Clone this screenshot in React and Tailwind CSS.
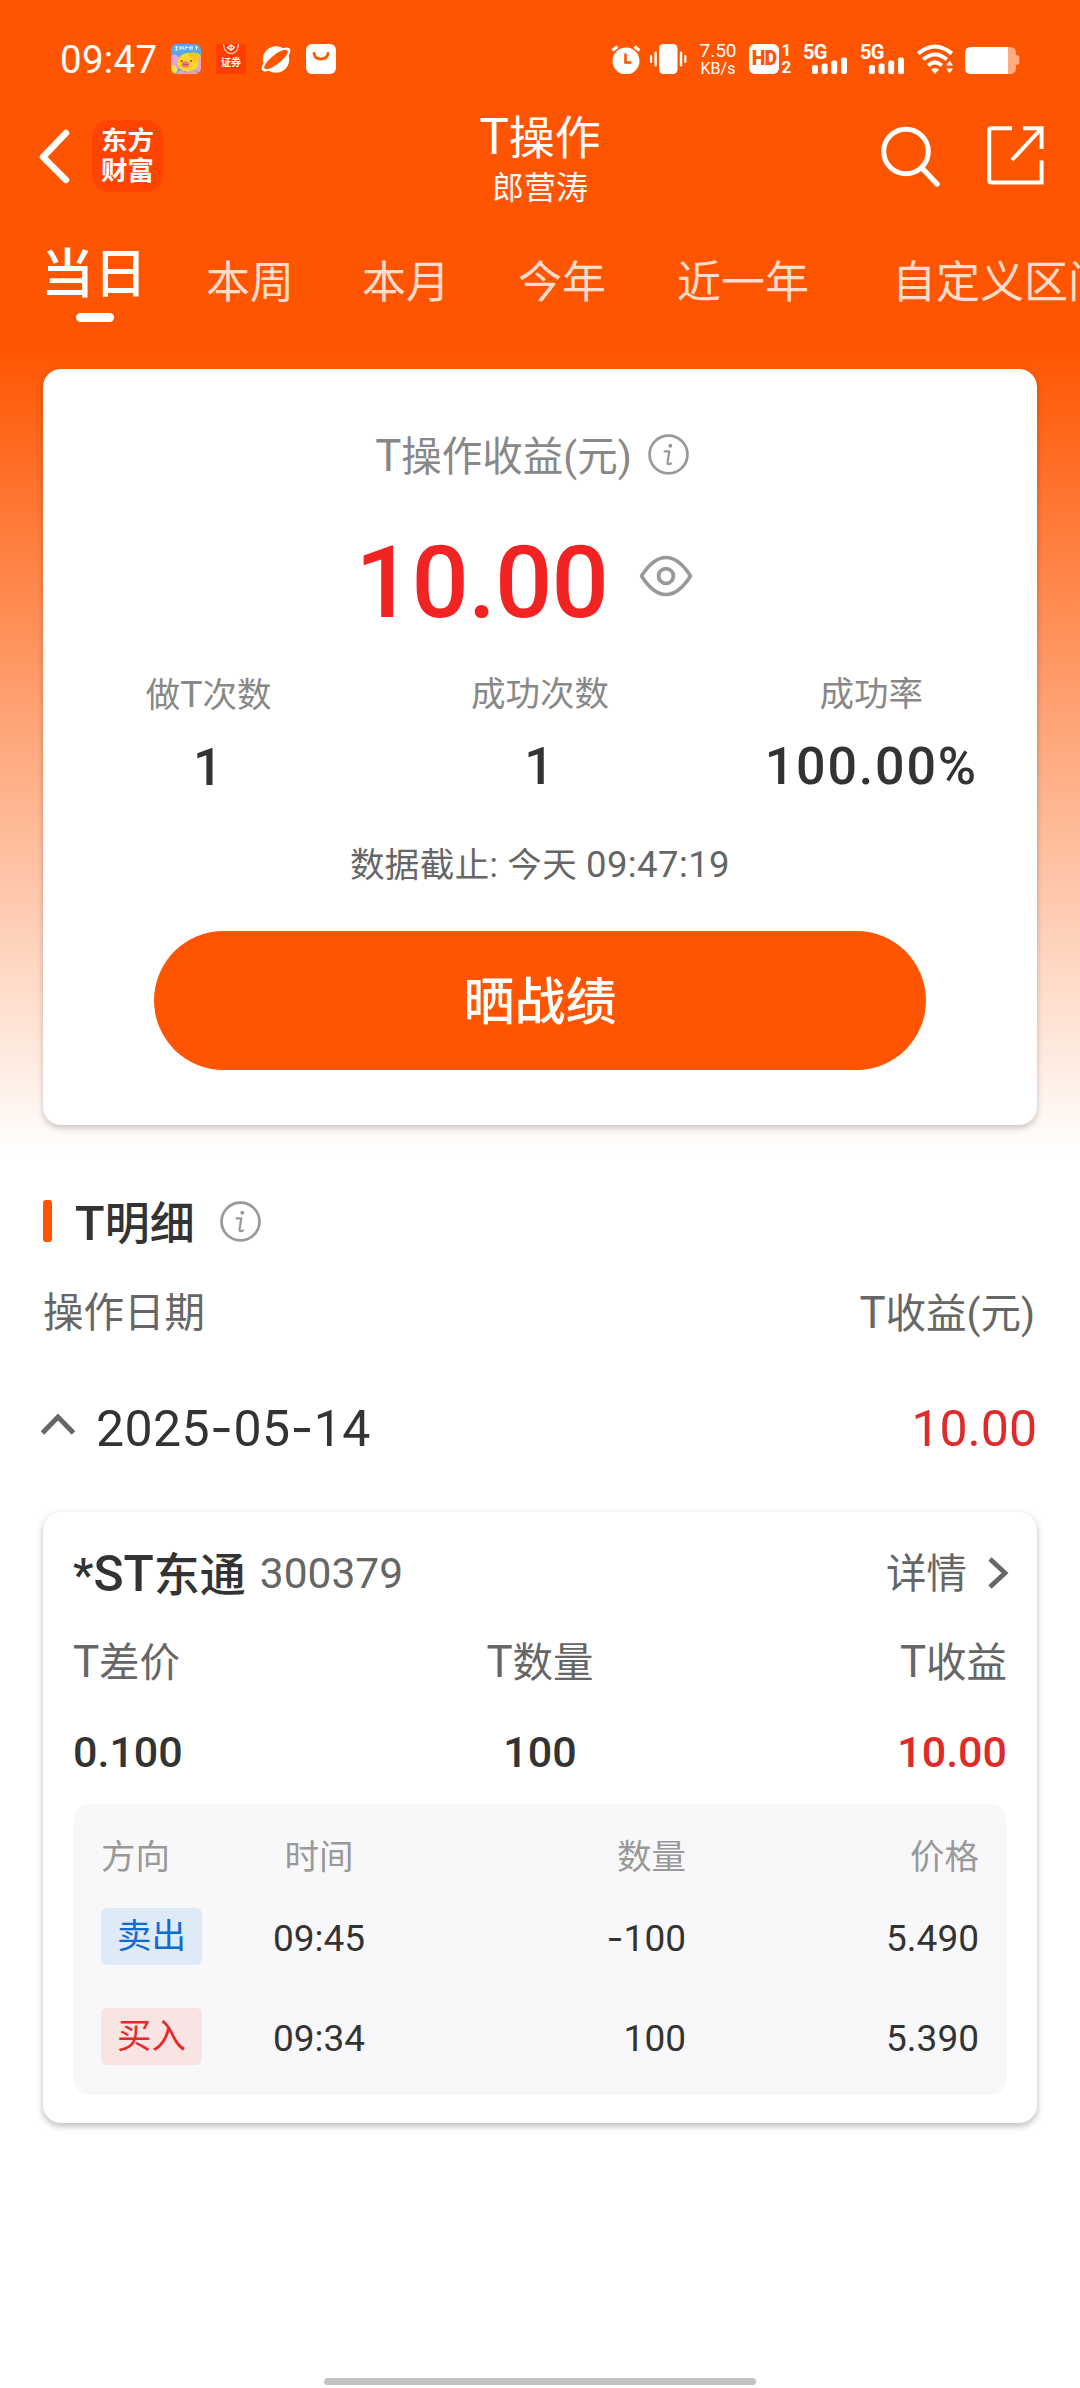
import React, {useState} from "react";

const TABS = [
	{key: "day", label: "当日", className: ""},
	{key: "week", label: "本周", className: "ml-[62px]"},
	{key: "month", label: "本月", className: "ml-[68px]"},
	{key: "year", label: "今年", className: "ml-[68px]"},
	{key: "lastYear", label: "近一年", className: "ml-[71px]"},
	{key: "custom", label: "自定义区间", className: "ml-[83px]"},
];

const STATS = [
	{label: "做T次数", value: "1"},
	{label: "成功次数", value: "1"},
	{label: "成功率", value: "100.00%"},
];

const TRADES = [
	{side: "sell", sideText: "卖出", time: "09:45", amount: "-100", price: "5.490"},
	{side: "buy", sideText: "买入", time: "09:34", amount: "100", price: "5.390"},
];

// latin letters sit a little taller than the chinese ones
function Label({children}) {
	return children.split(/([A-Z]+)/).map((part, index) =>
		/[A-Z]/.test(part) ? (
			<span key={index} className="text-[1.08em]">
				{part}
			</span>
		) : (
			part
		)
	);
}

// numbers with a wide hyphen (dates, negative amounts)
function Digits({children}) {
	return children.split(/(-)/).map((part, index) =>
		part === "-" ? (
			<span key={index} className="font-['Inter',sans-serif]">
				-
			</span>
		) : (
			part
		)
	);
}

function InfoIcon() {
	return (
		<svg width="41" height="41" viewBox="0 0 42 42" fill="none">
			<circle cx="21" cy="21" r="19.4" stroke="#999" strokeWidth="2.8" />
			<circle cx="22.8" cy="12" r="2" fill="#999" />
			<path d="M17 17.8 H21.8 L20 29.4 Q20 31 21.5 30.8 L23.6 30.2" stroke="#999" strokeWidth="2.3" strokeLinejoin="round" strokeLinecap="round" />
		</svg>
	);
}

function SignalIcon() {
	return (
		<div className="relative w-[45px] h-[30px]">
			<span className="absolute left-0 top-0 text-[20px] leading-[16px] font-bold tracking-[-0.8px]">5G</span>
			<svg className="absolute left-[9px] top-[13px]" width="36" height="17" viewBox="0 0 36 17" fill="#fff">
				<rect x="0" y="8" width="6" height="9" rx="2" />
				<rect x="9.6" y="6.5" width="6" height="10.5" rx="2" />
				<rect x="19.2" y="3.5" width="6" height="13.5" rx="2" />
				<rect x="29" y="0.5" width="6" height="16.5" rx="2" />
			</svg>
		</div>
	);
}

function StatusBar() {
	return (
		<div className="h-[104px] pt-[44px] pl-[60px] pr-[60px] flex items-start text-white">
			<span className="w-[111px] text-[38.5px] leading-[31px] tracking-[0.3px]">09:47</span>

			{/* notification icons */}
			<div className="flex gap-[15px]">
				<svg width="30" height="30" viewBox="0 0 30 30">
					<defs>
						<clipPath id="duckClip">
							<rect width="30" height="30" rx="6" />
						</clipPath>
					</defs>
					<g clipPath="url(#duckClip)">
						<rect width="30" height="30" fill="#58a8ea" />
						<path d="M0 12 Q5 8 8 14 L9 24 L0 26 Z" fill="#e7a3d8" />
						<path d="M30 12 L24 17 L25 27 L30 28 Z" fill="#f3a3b6" />
						<ellipse cx="17" cy="18.5" rx="10.5" ry="9.5" fill="#fcd52c" />
						<path d="M17 9 Q27 7 30 12 Q27 18 22 17 Z" fill="#f6c81f" />
						<path d="M0 21 Q4 20 7 26 L4 30 H0 Z" fill="#f9e04a" />
						<ellipse cx="14.5" cy="20.5" rx="4" ry="3.2" fill="#ef7f6a" />
						<circle cx="13.2" cy="20.5" r="0.8" fill="#a83a30" />
						<circle cx="16" cy="20.5" r="0.8" fill="#a83a30" />
						<circle cx="10.5" cy="17" r="0.9" fill="#5b3a14" />
						<circle cx="20" cy="17" r="0.9" fill="#5b3a14" />
						<path d="M5 30 Q8 25 12 27 Q16 30 20 27 Q25 25 27 30 Z" fill="#f39bb0" />
						<path d="M4 3 h3 M5.5 2 v4 M4 6 h3 M9 2 v4 M9 4 h3 M12 2 v4 M15 2 l-1 4 M14.5 3.5 h3 M19 2 v4 M19 3 h3 M21 3 v3 M24 3 h3 M25.5 3 v3" stroke="#fff" strokeWidth="0.9" fill="none" />
					</g>
				</svg>

				<div className="w-[30px] h-[30px] rounded-[2px] bg-[#ff3d05] flex flex-col items-center overflow-hidden">
					<svg width="18" height="11" viewBox="0 0 18 11" fill="none" stroke="#fff">
						<path d="M1.5 0 Q2 9.5 9 9.5 Q16 9.5 16.5 0" strokeWidth="1" />
						<path d="M5.5 3.5 L9 1 L12.5 3.5 L9 6.5 Z M9 2 v5" strokeWidth="1.1" />
					</svg>
					<span className="mt-[2px] text-[10px] leading-[12px] font-bold">证券</span>
				</div>

				<svg width="30" height="30" viewBox="0 0 30 30">
					<circle cx="15" cy="15.5" r="13.2" fill="#fff" />
					<g transform="rotate(-38 15 15.5)">
						<ellipse cx="15" cy="15.5" rx="17.5" ry="6.6" fill="#fff" />
						<ellipse cx="15" cy="15.5" rx="14.5" ry="4.6" fill="#f50" />
					</g>
				</svg>

				<svg width="30" height="30" viewBox="0 0 30 30">
					<rect width="30" height="30" rx="6" fill="#fff" />
					<path d="M8 9.5 Q9 15 15 15 Q21 15 22 9.5" stroke="#f50" strokeWidth="2.8" strokeLinecap="round" fill="none" />
				</svg>
			</div>

			<div className="ml-auto mr-[1px] flex">
				<svg width="30" height="30" viewBox="0 0 30 30">
					<circle cx="15" cy="17" r="13.5" fill="#fff" />
					<path d="M1.5 6.5 L6.5 2.5 M28.5 6.5 L23.5 2.5" stroke="#fff" strokeWidth="3.2" />
					<path d="M14.5 9.5 V18.5 H20.5" stroke="#f50" strokeWidth="2.6" fill="none" />
				</svg>
				<svg className="ml-[9px]" width="37" height="30" viewBox="0 0 37 30" fill="#fff">
					<rect x="9" y="0" width="18.5" height="30" rx="4.5" />
					<rect x="0" y="11" width="2.2" height="8" rx="1" />
					<rect x="4.4" y="7.5" width="2.4" height="15" rx="1" />
					<rect x="29.8" y="7.5" width="2.4" height="15" rx="1" />
					<rect x="34.2" y="11" width="2.2" height="8" rx="1" />
				</svg>
				<div className="ml-[12px] w-[38px] flex flex-col items-center">
					<span className="text-[19px] leading-[14px]">7.50</span>
					<span className="mt-[2px] text-[16px] leading-[17px]">KB/s</span>
				</div>
				<div className="ml-[12px] w-[30px] h-[30px] rounded-[6px] bg-white text-[#ff5500] text-[19.5px] leading-[30px] tracking-[-0.8px] font-black text-center">HD</div>
				<div className="ml-[2px] w-[11px] flex flex-col items-center text-[17px] font-bold">
					<span className="leading-[13px]">1</span>
					<span className="mt-[2px] leading-[17px]">2</span>
				</div>
				<div className="ml-[11px]">
					<SignalIcon />
				</div>
				<div className="ml-[12px]">
					<SignalIcon />
				</div>
				<svg className="ml-[12px]" width="38" height="30" viewBox="0 0 38 30" fill="none" stroke="#fff">
					<path d="M1.2 9.6 Q18 -4.6 34.8 9.6" strokeWidth="4" />
					<path d="M6.2 15.6 Q18 5.4 29.8 15.6" strokeWidth="4" />
					<path d="M11.2 21.4 Q18 15.4 24.8 21.4" strokeWidth="4" />
					<path d="M14 25.6 Q18 22.6 22 25.6 L18 30 Z" fill="#fff" stroke="none" />
					<path d="M29.2 21.5 L32.6 16.5 L36 21.5 Z M29.2 24.5 L32.6 29.5 L36 24.5 Z" fill="#fff" stroke="none" />
				</svg>
				<svg className="ml-[10px] -mr-[1px]" width="55" height="30" viewBox="0 0 55 30">
					<path d="M43 3 H45 Q51 3 51 9 V11 Q54.3 11.5 54.3 13.5 V18.5 Q54.3 20.5 51 21 V24 Q51 30 45 30 H43 Z" fill="#ffab80" />
					<path d="M6 3 H43 V30 H6 Q0 30 0 24 V9 Q0 3 6 3 Z" fill="#fff" />
				</svg>
			</div>
		</div>
	);
}

function NavBar() {
	return (
		<div className="h-[104px] pl-[38px] pr-[35px] grid grid-cols-[1fr_auto_1fr] grid-rows-[104px] items-center text-white">
			<div className="flex items-center">
				<svg width="34" height="56" viewBox="0 0 34 56" fill="none">
					<path d="M28 5 L5 29 L28 52" stroke="#fff" strokeWidth="6.5" strokeLinecap="round" strokeLinejoin="round" />
				</svg>
				<div className="ml-[20px] w-[71px] h-[72px] rounded-[16px] bg-[#ff4400] flex flex-col items-center justify-center text-[26.5px] leading-[30px] font-bold">
					<span>东方</span>
					<span>财富</span>
				</div>
			</div>

			<div className="self-start pt-[8px] mr-[3px] flex flex-col items-center">
				<h1 className="text-[46px] leading-[51px]">
					<Label>T操作</Label>
				</h1>
				<p className="mt-[3px] text-[32px] leading-[42px]">郎营涛</p>
			</div>

			<div className="flex justify-end items-center gap-[46px]">
				<svg width="62" height="62" viewBox="0 0 62 62" fill="none" stroke="#fff">
					<circle cx="27" cy="26.5" r="22.3" strokeWidth="5" />
					<path d="M43 43 L58 59" strokeWidth="5.4" strokeLinecap="round" />
				</svg>
				<svg className="mt-[-2px]" width="58" height="60" viewBox="0 0 58 60" fill="none" stroke="#fff" strokeWidth="4">
					<path d="M25 3.2 H4.5 Q2.2 3.2 2.2 5.5 V55 Q2.2 57.5 4.5 57.5 H54.6 V35.5" />
					<path d="M36 3.2 H54.6 V24" />
					<path d="M54 4 L25 35" />
				</svg>
			</div>
		</div>
	);
}

function RangeTabs() {
	const [active, setActive] = useState("day");

	return (
		<div className="h-[161px] pl-[44px] flex items-start overflow-hidden whitespace-nowrap">
			{TABS.map((tab) =>
				tab.key === active ? (
					<button key={tab.key} className={`shrink-0 w-[100px] h-[130px] pt-[35px] flex flex-col items-center text-white ${tab.className}`}>
						<span className="text-[53px] leading-[64px] font-medium">{tab.label}</span>
						<span className="mt-[6px] w-[38px] h-[9px] rounded-full bg-white mr-[-2px]"></span>
					</button>
				) : (
					<button key={tab.key} onClick={() => setActive(tab.key)} className={`shrink-0 pt-[45px] text-[44px] leading-[60px] text-[#ffdccb] ${tab.className}`}>
						{tab.label}
					</button>
				)
			)}
		</div>
	);
}

function SummaryCard() {
	return (
		<section className="mx-[43px] h-[756px] pt-[57px] rounded-[18px] bg-white shadow-[0_3px_6px_rgba(0,0,0,0.22)] flex flex-col items-center">
			<div className="h-[60px] pr-[16px] flex items-center gap-[16px] text-[40.5px] leading-[60px] text-[#888]">
				<span>
					<Label>T操作收益(元)</Label>
				</span>
				<span className="mt-[-4px]">
					<InfoIcon />
				</span>
			</div>

			<div className="mt-[37px] h-[120px] pr-[32px] flex items-center gap-[31px]">
				<span className="text-[101px] leading-[120px] tracking-[-1px] font-medium text-[#f22323]">10.00</span>
				<svg className="mt-[-14px]" width="54" height="42" viewBox="0 0 54 42" fill="none" stroke="#999">
					<path d="M2.5 21 C12 6 20 2.5 27 2.5 C34 2.5 42 6 51.5 21 C42 36 34 39.5 27 39.5 C20 39.5 12 36 2.5 21 Z" strokeWidth="3.6" strokeLinejoin="round" />
					<circle cx="27" cy="21" r="7.4" strokeWidth="3.8" />
				</svg>
			</div>

			<div className="mt-[27px] w-full grid grid-cols-3">
				{STATS.map((stat) => (
					<div key={stat.label} className="flex flex-col items-center">
						<span className="text-[34.5px] leading-[48px] text-[#888]">
							<Label>{stat.label}</Label>
						</span>
						<span className="mt-[19px] text-[52px] leading-[60px] tracking-[1.8px] font-medium text-[#333]">{stat.value}</span>
					</div>
				))}
			</div>

			<p className="mt-[43px] text-[34.5px] leading-[48px] tracking-[0.4px] text-[#666]">
				数据截止: 今天 <span className="text-[36.5px]">09:47:19</span>
			</p>

			<button className="mt-[42px] w-[772px] h-[139px] pt-[4px] rounded-full bg-[#ff5500] text-white text-[51px] leading-[135px] font-medium">晒战绩</button>
		</section>
	);
}

function TradeTable() {
	return (
		<div className="mt-[22px] h-[291px] px-[28px] rounded-[18px] bg-[#f8f8fa]">
			<div className="pt-[28px] flex text-[34.5px] leading-[50px] text-[#999]">
				<span className="w-[136px]">方向</span>
				<span className="w-[164px] text-center">时间</span>
				<span className="w-[285px] text-right">数量</span>
				<span className="flex-1 text-right">价格</span>
			</div>
			{TRADES.map((trade) => (
				<div key={trade.time} className="mt-[26px] mb-[43px] h-[57px] flex items-center text-[37px] leading-[57px] text-[#333]">
					<div className="w-[136px]">
						<span className={`block w-[101px] h-[57px] rounded-[6px] text-[34.5px] text-center ${trade.side === "sell" ? "bg-[#dfeaf7] text-[#0e6cd0]" : "bg-[#f9e4e4] text-[#e8282b]"}`}>{trade.sideText}</span>
					</div>
					<span className="pt-[3px] w-[164px] text-center">{trade.time}</span>
					<span className="pt-[3px] w-[285px] text-right">
						<Digits>{trade.amount}</Digits>
					</span>
					<span className="pt-[3px] flex-1 text-right">{trade.price}</span>
				</div>
			))}
		</div>
	);
}

function StockCard() {
	return (
		<section className="mx-[43px] h-[611px] pt-[32px] px-[30px] rounded-[18px] bg-white shadow-[0_3px_7px_rgba(0,0,0,0.28)]">
			<div className="h-[60px] flex items-center leading-[60px]">
				<span className="text-[46px] font-medium text-[#333]">
					<Label>*ST东通</Label>
				</span>
				<span className="ml-[14px] text-[42.5px] text-[#666]">300379</span>
				<span className="ml-auto text-[40.5px] text-[#666]">详情</span>
				<svg className="ml-[20px] mr-[-4px] mt-[-3px]" width="24" height="34" viewBox="0 0 24 34" fill="none">
					<path d="M3 3 L18 17 L3 31" stroke="#666" strokeWidth="4.8" />
				</svg>
			</div>

			<div className="mt-[28px] grid grid-cols-3 text-[40.5px] leading-[60px] text-[#666]">
				<span>
					<Label>T差价</Label>
				</span>
				<span className="text-center">
					<Label>T数量</Label>
				</span>
				<span className="text-right">
					<Label>T收益</Label>
				</span>
			</div>
			<div className="mt-[29px] grid grid-cols-3 text-[43px] leading-[60px] font-medium text-[#333]">
				<span>0.100</span>
				<span className="text-center">100</span>
				<span className="text-right text-[#e02a2a]">10.00</span>
			</div>

			<TradeTable />
		</section>
	);
}

function App() {
	const [open, setOpen] = useState(true);

	return (
		<div className="w-[1080px] h-[2388px] overflow-hidden flex flex-col bg-white font-['Roboto','Noto_Sans_CJK_SC',sans-serif]">
			<div className="h-[1155px] shrink-0 bg-[linear-gradient(to_bottom,#ff5500_0px,#ff5500_345px,#ffffff_1155px)]">
				<StatusBar />
				<NavBar />
				<RangeTabs />
				<SummaryCard />
			</div>

			{/* T detail list */}
			<div className="pt-[39px] px-[43px] flex items-center">
				<span className="w-[9px] h-[42px] mb-[7px] rounded-[3px] bg-[#ff5500]"></span>
				<h2 className="ml-[23px] text-[45px] leading-[60px] font-medium text-[#333]">
					<Label>T明细</Label>
				</h2>
				<span className="ml-[25px] mb-[7px]">
					<InfoIcon />
				</span>
			</div>
			<div className="mt-[28px] px-[43px] flex justify-between text-[40.5px] leading-[60px] text-[#666]">
				<span>操作日期</span>
				<span className="mr-[2px]">
					<Label>T收益(元)</Label>
				</span>
			</div>
			<button className="mt-[54px] pl-[40px] pr-[43px] flex items-center text-[50px] leading-[60px] text-[#333]" onClick={() => setOpen(!open)}>
				<svg className="mt-[-10px]" width="36" height="26" viewBox="0 0 36 26" fill="none">
					<path d="M2.5 22 L18 6 L33.5 22" stroke="#666" strokeWidth="4.8" />
				</svg>
				<span className="ml-[20px] tracking-[0.4px]">
					<Digits>2025-05-14</Digits>
				</span>
				<span className="ml-auto text-[#e02a2a]">10.00</span>
			</button>

			<div className="mt-[53px]">{open && <StockCard />}</div>

			<div className="mt-auto mb-[3px] mx-auto w-[432px] h-[7px] shrink-0 rounded-full bg-[#c2c2c2]"></div>
		</div>
	);
}

export default App;
